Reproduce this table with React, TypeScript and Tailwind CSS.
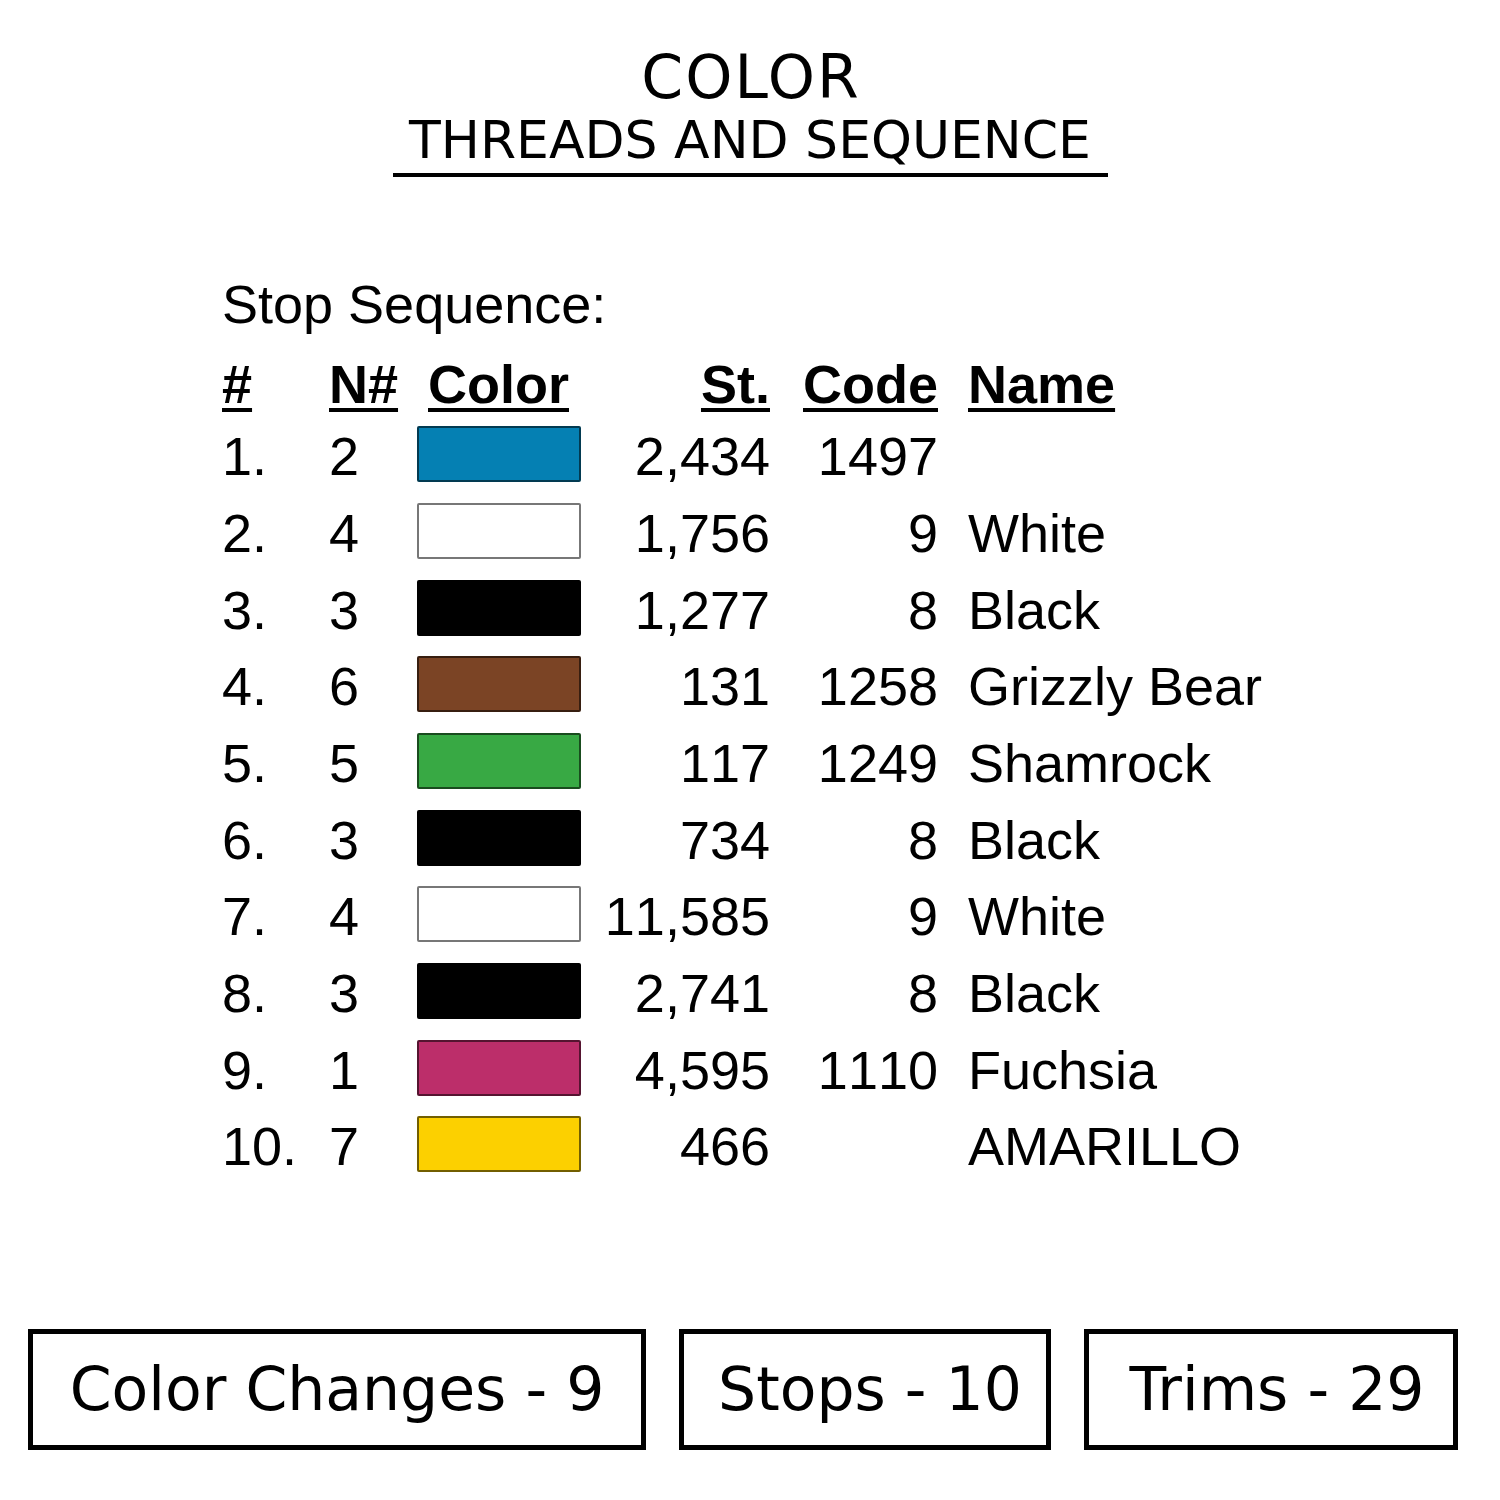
import React from "react";

type Row = {
  n: string;
  needle: string;
  color: string;
  stitches: string;
  code: string;
  name: string;
};

const rows: Row[] = [
  { n: "1.", needle: "2", color: "#0580B3", stitches: "2,434", code: "1497", name: "" },
  { n: "2.", needle: "4", color: "#FFFFFF", stitches: "1,756", code: "9", name: "White" },
  { n: "3.", needle: "3", color: "#000000", stitches: "1,277", code: "8", name: "Black" },
  { n: "4.", needle: "6", color: "#7B4425", stitches: "131", code: "1258", name: "Grizzly Bear" },
  { n: "5.", needle: "5", color: "#38A944", stitches: "117", code: "1249", name: "Shamrock" },
  { n: "6.", needle: "3", color: "#000000", stitches: "734", code: "8", name: "Black" },
  { n: "7.", needle: "4", color: "#FFFFFF", stitches: "11,585", code: "9", name: "White" },
  { n: "8.", needle: "3", color: "#000000", stitches: "2,741", code: "8", name: "Black" },
  { n: "9.", needle: "1", color: "#BC2E6A", stitches: "4,595", code: "1110", name: "Fuchsia" },
  { n: "10.", needle: "7", color: "#FCD000", stitches: "466", code: "", name: "AMARILLO" },
];

const stats = [
  { label: "Color Changes - 9", box: "w-[618px]" },
  { label: "Stops - 10", box: "w-[372px] pl-[10px]" },
  { label: "Trims - 29", box: "w-[374px] pl-[12px]" },
];

export default function App() {
  return (
    <div className="w-[1500px] h-[1500px] bg-white text-black flex flex-col">
      {/* Heading */}
      <div className="flex flex-col items-center pt-[47px] font-['DejaVu_Sans',sans-serif]">
        <div className="text-[60px] leading-[60px] h-[60px] tracking-[2px] pl-[2px]">COLOR</div>
        <div className="mt-[7px] text-[52px] leading-[52px] h-[52px]">THREADS AND SEQUENCE</div>
        <div className="mt-[7px] w-[715px] h-[4px] bg-black" />
      </div>

      {/* Stop sequence table */}
      <div className="ml-[222px] mt-[97px] font-['Liberation_Sans',Arial,sans-serif] text-[54px] [font-kerning:none]">
        <div className="leading-[60px] h-[60px]">Stop Sequence:</div>
        <div className="mt-[16px] flex items-center h-[68px] font-bold leading-[68px] underline decoration-[4px] underline-offset-[5px]">
          <div className="w-[107px]">#</div>
          <div className="w-[99px]">N#</div>
          <div className="w-[153px]">Color</div>
          <div className="w-[189px] text-right">St.</div>
          <div className="w-[168px] text-right">Code</div>
          <div className="w-[30px]" />
          <div>Name</div>
        </div>
        {rows.map((r, i) => (
          <div key={i} className="flex items-center h-[76.67px] leading-[76px] whitespace-nowrap">
            <div className="w-[107px]">{r.n}</div>
            <div className="w-[88px]">{r.needle}</div>
            <div className="w-[164px] flex items-center">
              <div
                className={`w-[164px] h-[56px] -mt-[4px] rounded-[2px] border-2 ${
                  r.color === "#FFFFFF" ? "border-[#777]" : "border-black/55"
                }`}
                style={{ backgroundColor: r.color }}
              />
            </div>
            <div className="w-[189px] text-right">{r.stitches}</div>
            <div className="w-[168px] text-right">{r.code}</div>
            <div className="w-[30px]" />
            <div>{r.name}</div>
          </div>
        ))}
      </div>

      {/* Totals */}
      <div className="mt-[144px] ml-[28px] flex gap-[33px] font-['DejaVu_Sans',sans-serif]">
        {stats.map((s) => (
          <div
            key={s.label}
            className={`${s.box} h-[121px] border-[5px] border-black flex items-center justify-center text-[60px] leading-[60px]`}
          >
            {s.label}
          </div>
        ))}
      </div>
    </div>
  );
}
